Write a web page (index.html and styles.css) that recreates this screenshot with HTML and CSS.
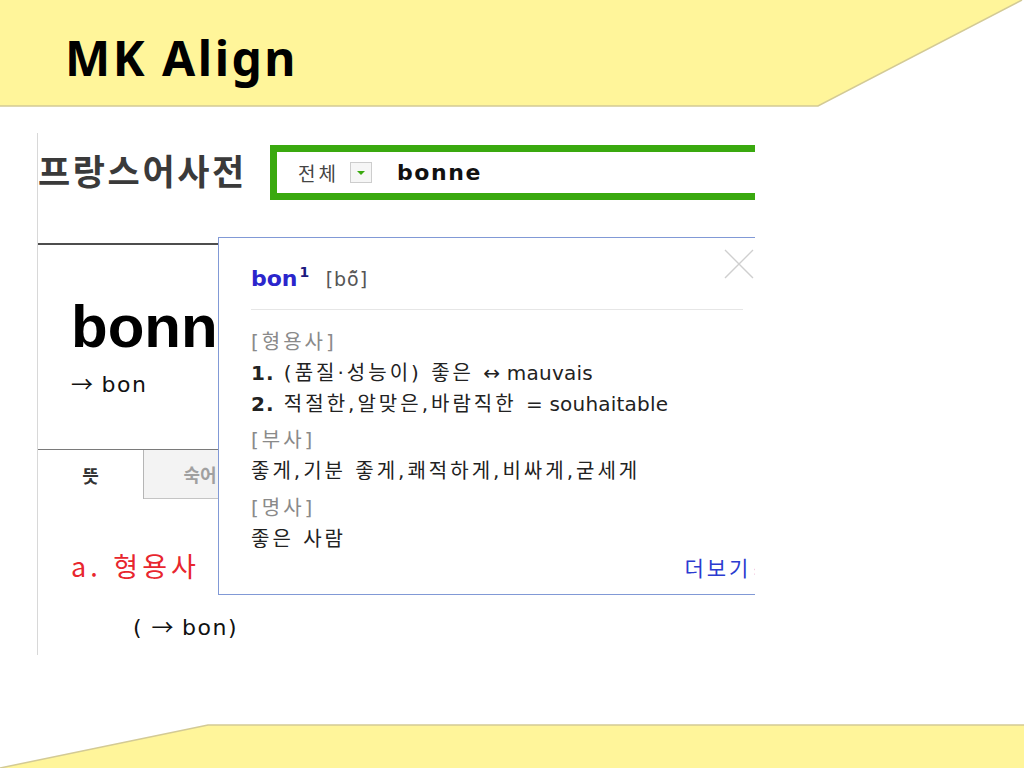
FILE: index.html
```html
<!DOCTYPE html>
<html lang="ko">
<head>
  <meta charset="utf-8">
  <title>MK Align</title>
  <link rel="stylesheet" href="styles.css">
</head>
<body>
  <header class="slide-head">
    <svg class="band" width="1024" height="108" viewBox="0 0 1024 108">
      <polygon points="0,0 1022,0 818,106 0,106" fill="#fff59a"/>
      <polyline points="1022,0 818,106 0,106" fill="none" stroke="#d3ca95" stroke-width="1.5"/>
    </svg>
    <h1 class="title">MK Align</h1>
  </header>

  <main class="shot">
    <div class="dict-top">
      <div class="dict-name">프랑스어사전</div>
      <div class="search">
        <span class="scope">전체</span>
        <span class="scope-btn"><span class="caret"></span></span>
        <span class="query">bonne</span>
      </div>
    </div>
    <div class="rule"></div>

    <div class="entry">
      <div class="headword">bonne</div>
      <div class="see"><span class="arrow">→</span> bon</div>
    </div>

    <div class="tabs">
      <div class="tab active">뜻</div>
      <div class="tab">숙어</div>
      <div class="tab-rest"></div>
    </div>

    <div class="pos">a. 형용사</div>
    <div class="ref">( <span class="arrow">→</span> bon)</div>

    <!-- 미리보기 레이어 -->
    <div class="popup">
      <svg class="close" width="30" height="30" viewBox="0 0 30 30">
        <path d="M1 1 L29 29 M29 1 L1 29" stroke="#cfcfcf" stroke-width="1.4" fill="none"/>
      </svg>
      <div class="pop-head">
        <span class="pop-word">bon<sup>1</sup></span>
        <span class="pop-pron">[bõ̃]</span>
      </div>
      <div class="group first">
        <div class="line label">[형용사]</div>
        <div class="line"><b class="num">1.</b> (품질·성능이) 좋은 <span class="fr">↔ mauvais</span></div>
        <div class="line"><b class="num">2.</b> 적절한,알맞은,바람직한 <span class="fr">= souhaitable</span></div>
      </div>
      <div class="group">
        <div class="line label">[부사]</div>
        <div class="line">좋게,기분 좋게,쾌적하게,비싸게,굳세게</div>
      </div>
      <div class="group last">
        <div class="line label">[명사]</div>
        <div class="line">좋은 사람</div>
      </div>
      <div class="more">더보기<span class="more-arr">»</span></div>
    </div>
  </main>

  <footer class="slide-foot">
    <svg class="band" width="1024" height="46" viewBox="0 0 1024 46">
      <polygon points="0,46 208,3 1024,3 1024,46" fill="#fff59a"/>
      <polyline points="0,46 208,3 1024,3" fill="none" stroke="#d3ca95" stroke-width="1.5"/>
    </svg>
  </footer>
</body>
</html>
```

FILE: styles.css
```css
/* 슬라이드 기본 */
body {
  margin: 0;
  width: 1024px;
  height: 768px;
  overflow: hidden;
  background: #fff;
  font-family: "Noto Sans", "Noto Sans CJK KR", sans-serif;
}

.slide-head {
  position: relative;
  height: 133px;
}

.band {
  position: absolute;
  left: 0;
  top: 0;
  display: block;
}

.title {
  position: relative;
  margin: 0;
  padding: 28px 0 0 65px;
  font-size: 48px;
  line-height: 60px;
  font-weight: bold;
  letter-spacing: 2.5px;
  color: #000;
}

/* 사전 화면 캡처 */
.shot {
  position: relative;
  box-sizing: border-box;
  margin-left: 37px;
  width: 718px;
  height: 522px;
  border-left: 1px solid #d8d8d8;
  overflow: hidden;
  font-family: "DejaVu Sans", "Noto Sans CJK KR", sans-serif;
}

.dict-top {
  display: flex;
  align-items: center;
  padding-top: 12px;
  height: 55px;
}

.dict-name {
  flex: 0 0 232px;
  padding-bottom: 6px;
  font-family: "Noto Sans CJK KR", sans-serif;
  font-size: 35px;
  font-weight: bold;
  letter-spacing: 2.6px;
  color: #3a3a3a;
  line-height: 42px;
  white-space: nowrap;
}

.search {
  flex: 0 0 auto;
  box-sizing: border-box;
  width: 540px;
  height: 55px;
  border: 7px solid #3aa90f;
  border-right: none;
  display: flex;
  align-items: center;
  padding-left: 21px;
}

.scope {
  font-family: "Noto Sans CJK KR", sans-serif;
  font-size: 19px;
  letter-spacing: 3px;
  color: #444;
}

.scope-btn {
  box-sizing: border-box;
  width: 22px;
  height: 21px;
  margin-left: 11px;
  border: 1px solid #cdcdcd;
  background: #f6f6f6;
  display: flex;
  align-items: center;
  justify-content: center;
}

.caret {
  width: 0;
  height: 0;
  border-left: 4px solid transparent;
  border-right: 4px solid transparent;
  border-top: 4px solid #3aa90f;
}

.query {
  margin-left: 25px;
  font-size: 22px;
  font-weight: bold;
  letter-spacing: 1.6px;
  color: #111;
}

.rule {
  margin-top: 43px;
  height: 2px;
  background: #4d4d4d;
}

.entry {
  padding: 48px 0 0 33px;
  height: 156px;
}

.headword {
  font-family: "Liberation Sans", Arial, sans-serif;
  font-size: 60px;
  font-weight: bold;
  line-height: 67px;
  color: #000;
  white-space: nowrap;
}

.see {
  margin-top: 9px;
  font-size: 22px;
  line-height: 26px;
  letter-spacing: 1.5px;
  color: #111;
}

.arrow {
  font-family: "Noto Sans CJK KR", sans-serif;
  letter-spacing: 0;
}

.tabs {
  display: flex;
  height: 49px;
  border-top: 1px solid #7a7a7a;
}

.tab {
  display: flex;
  align-items: center;
  justify-content: center;
  font-family: "Noto Sans CJK KR", sans-serif;
  font-size: 18px;
  font-weight: bold;
  color: #a0a0a0;
  flex: 0 0 112px;
  background: #f3f3f3;
  border-bottom: 1px solid #c4c4c4;
  border-right: 1px solid #c4c4c4;
}

.tab.active {
  flex: 0 0 105px;
  color: #333;
  background: #fff;
  border-bottom: none;
  border-right: 1px solid #b5b5b5;
}

.tab-rest {
  flex: 1;
  border-bottom: 1px solid #c4c4c4;
}

.pos {
  margin-top: 50px;
  padding-left: 33px;
  font-family: "Noto Sans CJK KR", sans-serif;
  font-size: 27px;
  line-height: 34px;
  letter-spacing: 4px;
  color: #e8262e;
}

.ref {
  margin-top: 29px;
  padding-left: 95px;
  font-size: 22px;
  line-height: 26px;
  letter-spacing: 1.5px;
  color: #111;
}

/* 미리보기 레이어 */
.popup {
  position: absolute;
  left: 180px;
  top: 104px;
  box-sizing: border-box;
  width: 560px;
  height: 358px;
  padding: 0 12px 0 32px;
  border: 1px solid #8199d6;
  background: #fff;
  font-size: 20px;
  letter-spacing: 3px;
  color: #222;
}

.close {
  position: absolute;
  left: 505px;
  top: 11px;
}

.pop-head {
  padding: 26px 0 15px 0;
  margin-right: 22px;
  border-bottom: 1px solid #e6e6e6;
  line-height: 30px;
  letter-spacing: 0;
}

.pop-word {
  font-size: 22px;
  font-weight: bold;
  color: #2b25cc;
}

.pop-word sup {
  font-size: 14px;
  line-height: 0;
  margin-left: 2px;
  vertical-align: 9px;
  color: #1d1a80;
}

.pop-pron {
  margin-left: 10px;
  font-size: 19px;
  letter-spacing: 1px;
  color: #555;
}

.group {
  margin-top: 5px;
}

.group.first {
  margin-top: 17px;
}

.group.last {
  margin-top: 6px;
}

.line {
  line-height: 31px;
  white-space: nowrap;
}

.label {
  color: #8a8a8a;
}

.num {
  letter-spacing: 1px;
  color: #222;
}

.fr {
  font-size: 20px;
  letter-spacing: 0.2px;
}

.more {
  font-size: 21px;
  line-height: 28px;
  text-align: right;
  color: #2b3bd0;
}

.more-arr {
  margin-left: 2px;
  font-size: 14px;
}

.slide-foot {
  position: relative;
  margin-top: 67px;
  height: 46px;
}
```
